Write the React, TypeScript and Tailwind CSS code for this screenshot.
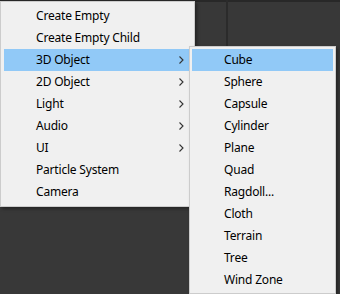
const mainItems: { label: string; sub?: boolean; active?: boolean }[] = [
  { label: "Create Empty" },
  { label: "Create Empty Child" },
  { label: "3D Object", sub: true, active: true },
  { label: "2D Object", sub: true },
  { label: "Light", sub: true },
  { label: "Audio", sub: true },
  { label: "UI", sub: true },
  { label: "Particle System" },
  { label: "Camera" },
];

const subItems = [
  "Cube",
  "Sphere",
  "Capsule",
  "Cylinder",
  "Plane",
  "Quad",
  "Ragdoll...",
  "Cloth",
  "Terrain",
  "Tree",
  "Wind Zone",
];

function Chevron() {
  return (
    <svg width="5" height="8" viewBox="0 0 5 8" className="shrink-0">
      <path d="M0.5 0.5 L4 4 L0.5 7.5" fill="none" stroke="#333" strokeWidth="1.1" />
    </svg>
  );
}

function Row({ label, sub, active }: { label: string; sub?: boolean; active?: boolean }) {
  return (
    <div
      className={`flex h-[22px] items-center justify-between pl-[32px] pr-[7px] ${
        active ? "bg-[#91c9f7]" : ""
      }`}
    >
      <span className="whitespace-nowrap">{label}</span>
      {sub && <Chevron />}
    </div>
  );
}

export default function App() {
  return (
    <div
      className="relative h-[294px] w-[340px] overflow-hidden bg-[#383838] text-[12px] tracking-[-0.2px] text-black"
      style={{ fontFamily: '"Noto Sans", "Liberation Sans", sans-serif' }}
    >
      <div className="h-[2px] bg-[#282828]" />
      <div className="absolute left-[226px] top-0 h-full w-[2px] bg-[#2b2b2b]" />

      <div className="absolute left-0 top-[1px] w-[195px] border border-[#cccccc] bg-[#f0f0f0] p-[3px] shadow-[2px_2px_3px_rgba(0,0,0,0.35)]">
        {mainItems.map((item) => (
          <Row key={item.label} {...item} />
        ))}
      </div>

      <div className="absolute left-[189px] top-[46px] w-[147px] border border-[#cccccc] bg-[#f0f0f0] p-[2px] shadow-[2px_2px_3px_rgba(0,0,0,0.35)]">
        {subItems.map((label, i) => (
          <Row key={label} label={label} active={i === 0} />
        ))}
      </div>
    </div>
  );
}
